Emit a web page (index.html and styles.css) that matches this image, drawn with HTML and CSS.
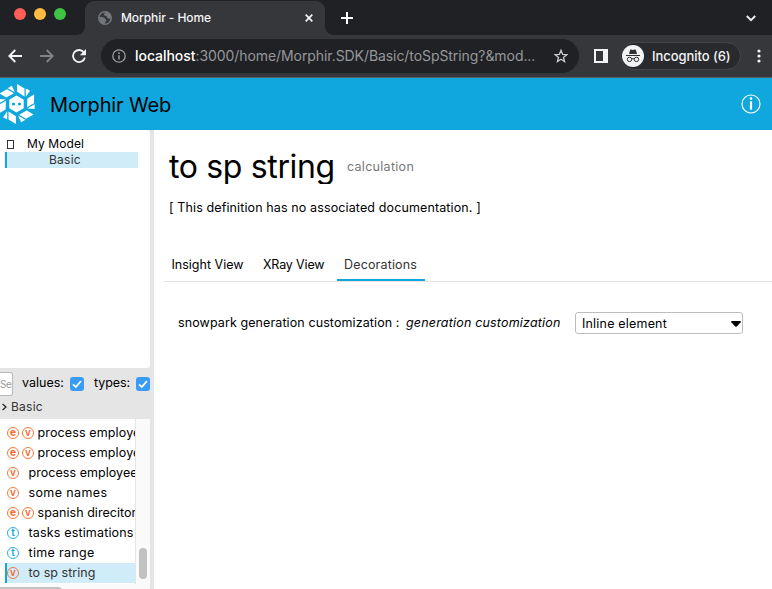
FILE: index.html
```html
<!DOCTYPE html>
<html lang="en">
<head>
<meta charset="utf-8">
<title>Morphir - Home</title>
<link rel="stylesheet" href="styles.css">
</head>
<body>
<div class="browser">
  <div class="tabstrip">
    <div class="lights"><i class="red"></i><i class="amber"></i><i class="green"></i></div>
    <div class="tab">
      <svg class="globe" width="14" height="14" viewBox="0 0 14 14"><circle cx="7" cy="7" r="6.3" fill="none" stroke="#74777b" stroke-width="1.4"/><path d="M8.5.5 12.5 3 13.5 7 11.5 8 9 6.8 8.5 5 6.2 4.6 6 3zM.6 6H4.5L7 7.6 8.3 9 7.5 11 6 13.3 3 12z" fill="#74777b"/></svg>
      <span class="tab-title">Morphir - Home</span>
      <svg class="close" width="8" height="8" viewBox="0 0 8 8"><path d="M.7.7 7.3 7.3M7.3.7.7 7.3" stroke="#f4f5f6" stroke-width="1.7"/></svg>
    </div>
    <svg class="plus" width="12" height="12" viewBox="0 0 12 12"><path d="M6 0v12M0 6h12" stroke="#fff" stroke-width="2"/></svg>
    <svg class="chevron" width="10" height="7" viewBox="0 0 10 7"><path d="M.8 1 5 5.2 9.2 1" fill="none" stroke="#eee" stroke-width="1.9"/></svg>
  </div>
  <div class="toolbar">
    <svg class="back" width="14" height="14" viewBox="0 0 14 14"><path d="M14 7H1.5M7.3 1 1.3 7l6 6" fill="none" stroke="#f1f3f4" stroke-width="1.8"/></svg>
    <svg class="forward" width="14" height="14" viewBox="0 0 14 14"><path d="M0 7h12.5M6.7 1l6 6-6 6" fill="none" stroke="#818387" stroke-width="1.8"/></svg>
    <svg class="reload" width="14" height="14" viewBox="0 0 14 14"><path d="M12.1 3.7A6 6 0 1 0 12.9 8.5" fill="none" stroke="#f1f3f4" stroke-width="1.8"/><path d="M14 0v6.2H7.8z" fill="#f1f3f4"/></svg>
    <div class="address">
      <svg class="site" width="14" height="14" viewBox="0 0 14 14"><circle cx="7" cy="7" r="6.2" fill="none" stroke="#9b9da0" stroke-width="1.3"/><path d="M7 6.2v4.3M7 3.3v1.6" stroke="#9b9da0" stroke-width="1.5"/></svg>
      <span class="host">localhost</span><span class="path">:3000/home/Morphir.SDK/Basic/toSpString?&amp;mod...</span>
      <svg class="star" width="14" height="14" viewBox="0 0 14 14"><path d="M7 1.3 8.6 5.3 12.8 5.6 9.5 8.4 10.6 12.6 7 10.3 3.4 12.6 4.5 8.4 1.2 5.6 5.4 5.3z" fill="none" stroke="#c8cacc" stroke-width="1.3"/></svg>
    </div>
    <svg class="panel" width="14" height="14" viewBox="0 0 14 14"><path fill="#f1f3f4" fill-rule="evenodd" d="M0 0h14v14H0zM2 2v10h7V2z"/></svg>
    <div class="profile">
      <svg width="22" height="22" viewBox="0 0 22 22"><circle cx="11" cy="11" r="11" fill="#f1f3f4"/><path d="M7 9 8 5.2Q8.2 4.4 9 4.6L11 5.1 13 4.6Q13.8 4.4 14 5.2L15 9z" fill="#303134"/><path d="M4 10.5h14M9.6 14q1.4-.7 2.8 0" stroke="#303134" fill="none"/><circle cx="7.5" cy="14.4" r="2.2" fill="none" stroke="#303134"/><circle cx="14.5" cy="14.4" r="2.2" fill="none" stroke="#303134"/></svg>
      <span>Incognito (6)</span>
    </div>
    <svg class="more" width="4" height="14" viewBox="0 0 4 14"><g fill="#f1f3f4"><circle cx="2" cy="2" r="1.6"/><circle cx="2" cy="7" r="1.6"/><circle cx="2" cy="12" r="1.6"/></g></svg>
  </div>
</div>
<header class="header">
  <svg class="logo" width="35" height="40" viewBox="0 0 35 40">
    <defs><path id="blade" d="M.6-20 8-15.6V-7.6L.6-12.2zM9.3-15.6 13.5-13.2 9.3-7.2z"/></defs>
    <g fill="#fff" transform="translate(16.5 20)">
      <path d="M0-8.6 7.2-4.3V4.3L0 8.6-7.2 4.3V-4.3z"/>
      <use href="#blade"/>
      <use href="#blade" transform="rotate(60)"/>
      <use href="#blade" transform="rotate(120)"/>
      <use href="#blade" transform="rotate(180)"/>
      <use href="#blade" transform="rotate(240)"/>
      <use href="#blade" transform="rotate(300)"/>
    </g>
    <circle cx="13.4" cy="20" r="1.6" fill="#10a7df"/><circle cx="19.5" cy="20" r="1.6" fill="#10a7df"/>
  </svg>
  <span class="brand">Morphir Web</span>
  <svg class="info" width="20" height="20" viewBox="0 0 20 20"><circle cx="10" cy="10" r="9" fill="none" stroke="#fff" stroke-width="1.2"/><path d="M10 7.3v8.4" stroke="#fff" stroke-width="2.2"/><circle cx="10" cy="4.6" r="1.3" fill="#fff"/></svg>
</header>
<div class="content">
  <aside class="sidebar">
    <div class="tree">
      <div class="tree-row"><i class="box"></i><span>My Model</span></div>
      <div class="tree-row child"><span>Basic</span></div>
    </div>
    <div class="filters">
      <div class="search">Se</div>
      <span class="lbl values">values:</span>
      <svg class="check" width="14" height="14" viewBox="0 0 14 14"><rect width="14" height="14" rx="3" fill="#389cf8"/><path d="M3 7.3 5.8 10 11 4" fill="none" stroke="#fff" stroke-width="1.8"/></svg>
      <span class="lbl types">types:</span>
      <svg class="check" width="14" height="14" viewBox="0 0 14 14"><rect width="14" height="14" rx="3" fill="#389cf8"/><path d="M3 7.3 5.8 10 11 4" fill="none" stroke="#fff" stroke-width="1.8"/></svg>
    </div>
    <div class="crumb"><svg class="gt" width="5" height="8" viewBox="0 0 5 8"><path d="M.6 1 4 4 .6 7" fill="none" stroke="#222" stroke-width="1.2"/></svg>Basic</div>
    <div class="list">
      <div class="rows">
        <div class="row"><b class="e">e</b><b>v</b><span>process employe</span></div>
        <div class="row"><b class="e">e</b><b>v</b><span>process employe</span></div>
        <div class="row one"><b>v</b><span>process employee</span></div>
        <div class="row one"><b>v</b><span class="names">some names</span></div>
        <div class="row"><b class="e">e</b><b>v</b><span class="spanish">spanish direcitor</span></div>
        <div class="row one"><b class="t">t</b><span class="tasks">tasks estimations</span></div>
        <div class="row one"><b class="t">t</b><span class="range">time range</span></div>
        <div class="row one selected"><b>v</b><span>to sp string</span></div>
      </div>
      <div class="track"><div class="thumb"></div></div>
    </div>
    <div class="hscroll"><div class="hthumb"></div></div>
  </aside>
  <main class="main">
    <div class="title"><h1>to sp string</h1><span>calculation</span></div>
    <p class="doc">[ This definition has no associated documentation. ]</p>
    <nav class="tabs"><span class="insight">Insight View</span><span class="xray">XRay View</span><span class="active">Decorations</span></nav>
    <div class="field">
      <span class="name">snowpark generation customization :</span>
      <em>generation customization</em>
      <div class="select"><span>Inline element</span><svg width="10" height="6" viewBox="0 0 10 6"><path d="M1 0h8q1.2.3.7 1.2L6 5.3Q5 6.4 4 5.3L.3 1.2Q-.2.3 1 0z"/></svg></div>
    </div>
  </main>
</div>
</body>
</html>
```
FILE: styles.css
```css
* { box-sizing: border-box; }
body { margin: 0; width: 772px; height: 589px; overflow: hidden; background: #fff; color: #000; font: 12px/16px Inter, sans-serif; white-space: nowrap; display: flex; flex-direction: column; }
svg { display: block; flex: none; }
.browser { height: 78px; flex: none; background: #36373b; border-bottom: 1px solid #5d6063; }
.tabstrip { height: 35px; display: flex; background: #202124; position: relative; }
.lights { display: flex; width: 85px; gap: 8px; padding: 8px 0 0 14px; border-bottom-right-radius: 7px; background: #202124; }
.lights i { width: 12px; height: 12px; border-radius: 50%; }
.red { background: #ff5f57; }
.amber { background: #febc40; }
.green { background: #3ec544; }
.tab { width: 240px; height: 35px; margin-top: 1px; padding: 0 12px 1px 13px; display: flex; align-items: center; border-radius: 9px 9px 0 0; background: #36373b; position: relative; }
.tab::before, .tab::after { content: ""; position: absolute; bottom: 1px; width: 8px; height: 8px; }
.tab::before { left: -8px; background: radial-gradient(circle at 0 0, #202124 7.5px, #36373b 8px); }
.tab::after { right: -8px; background: radial-gradient(circle at 100% 0, #202124 7.5px, #36373b 8px); }
.tab-title { margin-left: 9px; color: #f4f5f6; font-weight: 500; letter-spacing: -.08px; }
.close { margin-left: auto; }
.plus { margin: 12px 0 0 16px; }
.chevron { margin: 15px 16px 0 auto; }
.toolbar { height: 42px; display: flex; align-items: center; padding-left: 8px; }
.forward, .reload { margin-left: 18px; }
.address { margin-left: 15px; width: 478px; height: 34px; border-radius: 17px; background: #202124; display: flex; align-items: center; padding: 0 11px; font-size: 14px; }
.host { margin-left: 9px; color: #fff; font-weight: 500; letter-spacing: -.05px; }
.path { color: #96989b; letter-spacing: -.07px; }
.star { margin-left: auto; }
.panel { margin-left: 15px; }
.profile { margin-left: 12px; width: 121px; height: 28px; border: 1px solid #44464a; border-radius: 14px; background: #292a2d; display: flex; align-items: center; padding-left: 1px; color: #f4f5f6; font-size: 13px; font-weight: 500; letter-spacing: -.05px; }
.profile span { margin-left: 8px; }
.more { margin-left: 16px; }
.header { height: 52px; flex: none; background: #10a7df; display: flex; align-items: center; padding-right: 10px; }
.brand { margin: 1px 0 0 15px; font-size: 20px; line-height: 24px; letter-spacing: -.13px; }
.info { margin: 0 1px 1px auto; }
.content { display: flex; flex: 1; min-height: 0; }
.sidebar { width: 154px; flex: none; background: #e5e5e5; overflow: hidden; }
.tree { width: 150px; height: 238px; background: #fff; border-radius: 0 3px 3px 0; padding: 6px 12px 0 5px; }
.tree-row { height: 16px; display: flex; align-items: center; letter-spacing: .09px; }
.box { width: 7px; height: 9px; margin: 0 13px 0 2px; border: 1px solid #333; }
.child { border-left: 2px solid #10a7df; background: #cfecf8; padding-left: 42px; color: #333; letter-spacing: .26px; }
.filters { height: 29px; display: flex; align-items: center; padding-top: 2px; }
.search { width: 13px; height: 24px; padding-top: 3px; overflow: hidden; background: #fff; border: 1px solid #b9b9b9; border-left: 0; border-radius: 0 3px 3px 0; color: #999; font-size: 10px; letter-spacing: -.3px; }
.lbl { font-size: 12.5px; margin-bottom: 1px; }
.values { margin-left: 9px; width: 48px; }
.types { margin-left: 10px; width: 42px; letter-spacing: -.08px; }
.crumb { height: 22px; padding: 2px 0 4px 2px; color: #333; letter-spacing: .26px; display: flex; align-items: center; }
.gt { margin-right: 4px; }
.list { width: 150px; height: 165px; display: flex; background: #fafafa; }
.rows { width: 136px; height: 165px; padding-top: 4px; background: #fff; border-right: 1px solid #e5e5e5; overflow: hidden; font-size: 12.5px; }
.row { height: 20px; padding-left: 7px; display: flex; align-items: center; }
.row b { width: 12px; height: 12px; flex: none; border: 1px solid #f6783c; border-radius: 50%; margin-right: 3px; color: #f36b2d; font-size: 10px; line-height: 9px; font-weight: 600; text-align: center; }
.row b.e { font-weight: 800; }
.row b.t { border-color: #2bafe0; color: #10a7df; }
.row span { line-height: 18px; letter-spacing: .13px; margin-left: .5px; }
.row.one span { margin-left: 6.5px; letter-spacing: .05px; }
.row .spanish { letter-spacing: .04px; }
.row.one .names { letter-spacing: .39px; }
.row.one .tasks { letter-spacing: .16px; }
.row.one .range { letter-spacing: .31px; }
.row.selected { height: 20px; margin-left: 5px; padding-left: 0; border-left: 2px solid #10a7df; background: #cfecf8; color: #333; }
.track { width: 14px; padding: 129px 3px 0; }
.thumb { width: 8px; height: 31px; border-radius: 4px; background: #c1c1c1; }
.hscroll { width: 150px; height: 6px; background: #fafafa; padding-top: 3px; }
.hthumb { width: 62px; height: 8px; border-radius: 0 4px 4px 0; background: #c1c1c1; }
.main { flex: 1; padding-left: 10px; font-size: 12.5px; }
.title { height: 54px; padding: 20px 0 0 5px; display: flex; align-items: flex-start; }
h1 { margin: 0; width: 178px; height: 34px; font-size: 32px; line-height: 34px; font-weight: 400; letter-spacing: -.35px; overflow: hidden; }
.title span { margin-top: 9px; color: #777; letter-spacing: .29px; }
.doc { margin: 15px 0 0 5px; line-height: 18px; letter-spacing: .12px; }
.tabs { height: 37px; margin-top: 28px; display: flex; border-bottom: 1px solid #e5e5e5; margin-bottom: 30px; }
.tabs span { height: 36px; padding: 12px 8px 0 7.5px; }
.tabs .insight { width: 92px; letter-spacing: 0; }
.tabs .xray { width: 81px; padding-left: 7px; letter-spacing: -.16px; }
.tabs .active { width: 88px; padding-left: 7px; color: #333; letter-spacing: .16px; border-bottom: 2px solid #10a7df; }
.field { display: flex; align-items: center; height: 22px; padding-left: 14px; }
.name { width: 228px; letter-spacing: .1px; }
em { width: 169px; letter-spacing: .18px; }
.select { width: 168px; height: 22px; border: 1px solid #bdbdbd; border-radius: 3px; padding: 1px 1px 0 6px; display: flex; align-items: center; justify-content: space-between; letter-spacing: .19px; }
```
